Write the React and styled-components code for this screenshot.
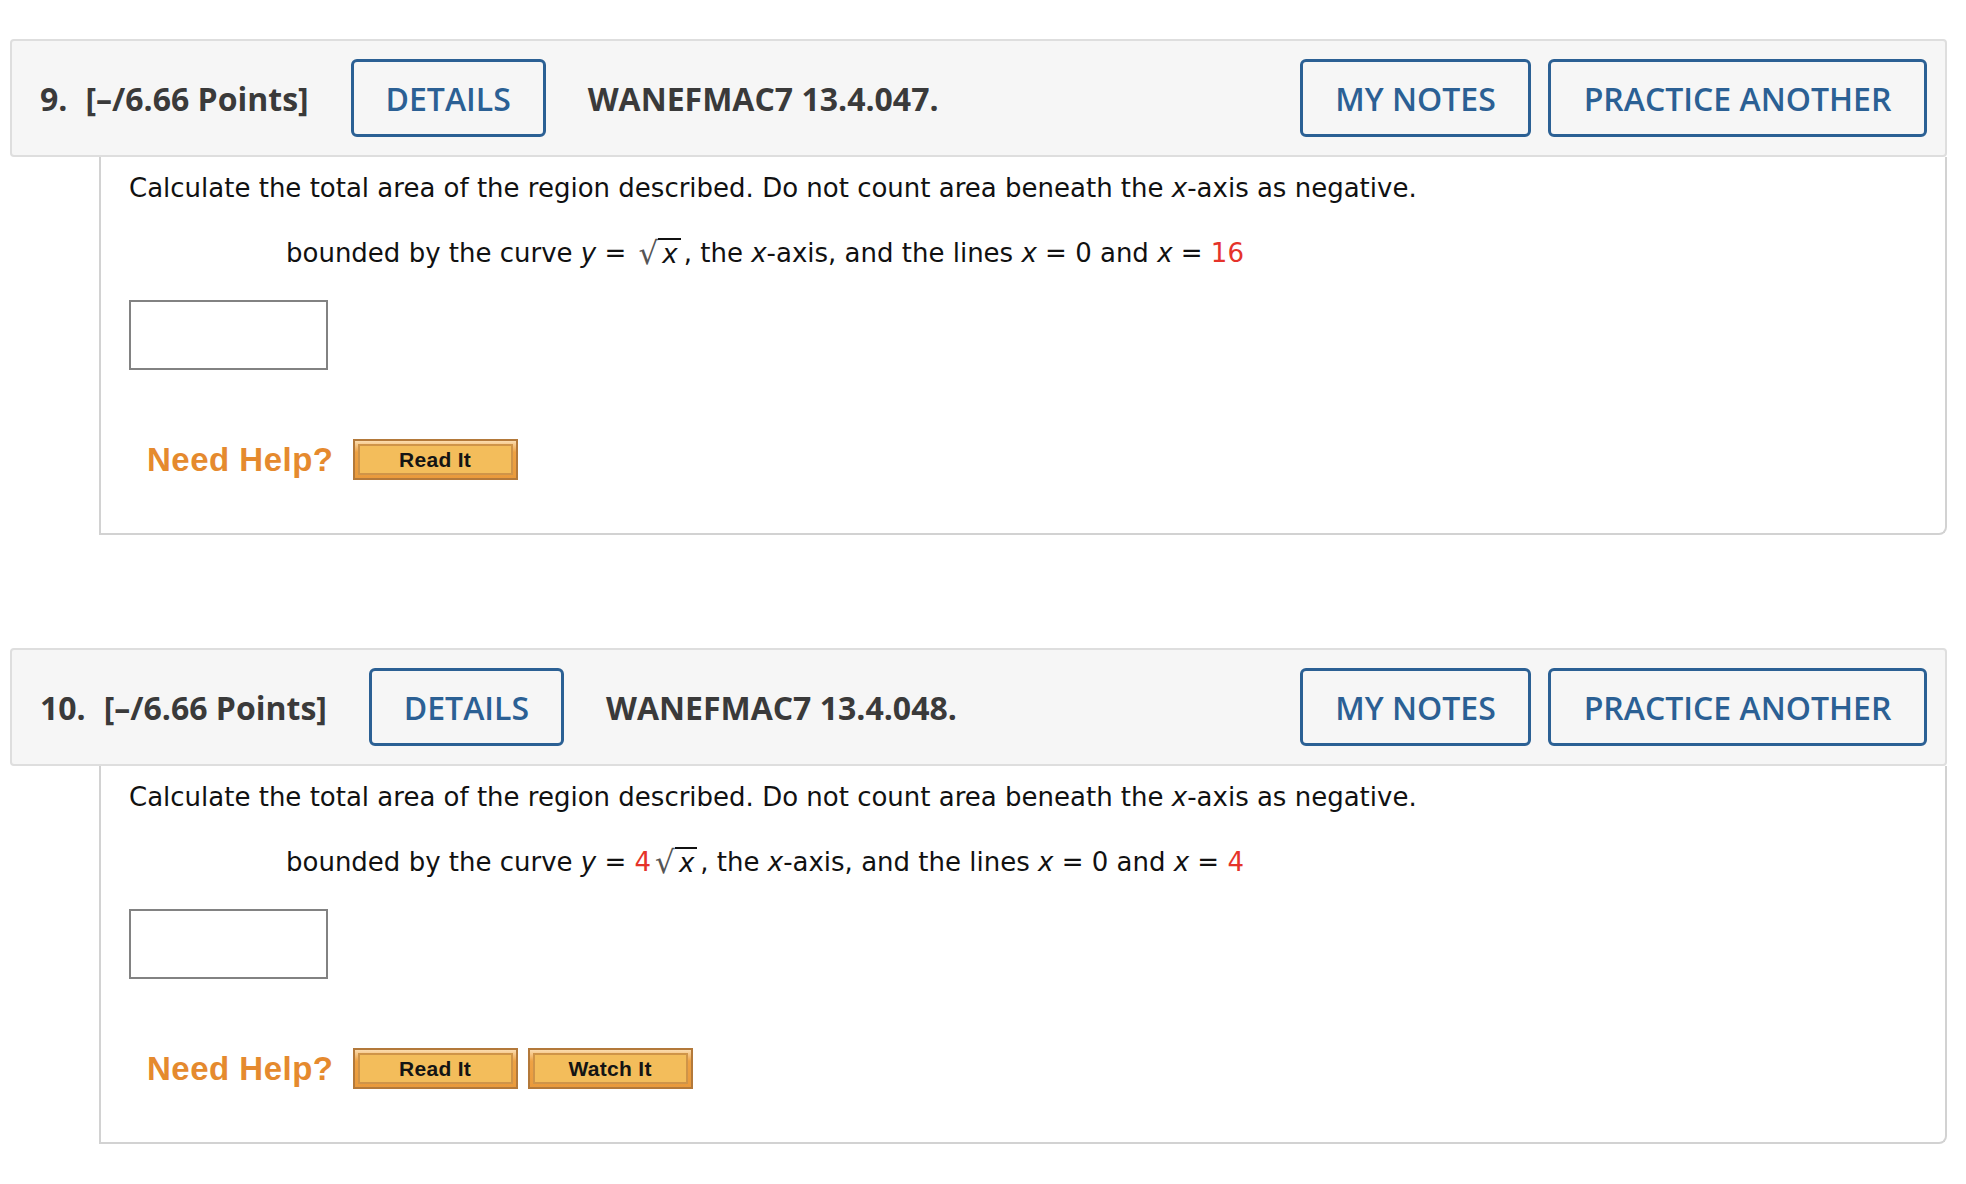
import React from 'react';
import styled, { createGlobalStyle } from 'styled-components';

const GlobalStyle = createGlobalStyle`
  body {
    margin: 0;
    background: #fff;
    font-family: "DejaVu Sans", Verdana, sans-serif;
  }
`;

const Page = styled.div`
  padding: 39px 19px 40px 10px;
`;

const Question = styled.section`
  margin-bottom: 113px;
`;

const Header = styled.div`
  display: flex;
  align-items: center;
  height: 114px;
  background: #f6f6f6;
  border: 2px solid #dedede;
  border-radius: 4px;
  padding: 0 18px 0 28px;
  font-family: "Open Sans", sans-serif;
`;

const Number = styled.span`
  font-size: 32px;
  font-weight: 700;
  color: #3a3a3a;
  margin-right: 18px;
`;

const Points = styled.span`
  font-size: 32px;
  font-weight: 700;
  color: #3a3a3a;
  margin-right: 42px;
`;

const Code = styled.span`
  font-size: 32px;
  font-weight: 700;
  color: #3a3a3a;
  margin-left: 42px;
  flex: 1;
`;

const OutlineButton = styled.button`
  height: 78px;
  width: ${p => p.$w}px;
  margin-left: ${p => p.$ml || 0}px;
  background: transparent;
  border: 3px solid #2b6094;
  border-radius: 6px;
  color: #2b6094;
  font-family: "Open Sans", sans-serif;
  font-size: 32px;
  font-weight: 600;
  padding: 0;
`;

const Body = styled.div`
  margin-left: 89px;
  border: 2px solid #d2d2d2;
  border-top: none;
  border-bottom-right-radius: 8px;
  padding: 16px 28px 53px 28px;
  color: #111;
  font-size: 26px;
`;

const Line = styled.div`
  line-height: 30px;
  white-space: nowrap;
  padding-left: ${p => p.$indent || 0}px;
  margin-top: ${p => p.$mt || 0}px;
`;

const Var = styled.i`
  font-style: italic;
`;

const Red = styled.span`
  color: #e5332a;
`;

const Radical = styled.span`
  display: inline-flex;
  align-items: flex-end;
  margin: 0 3px 0 4px;
  vertical-align: -2px;
`;

const Check = styled.span`
  color: #555;
  font-size: 31px;
  line-height: 30px;
`;

const Radicand = styled.span`
  border-top: 2px solid #111;
  line-height: 28px;
  padding: 0 3px 0 4px;
  font-style: italic;
`;

const AnswerBox = styled.input`
  display: block;
  width: 199px;
  height: 70px;
  box-sizing: border-box;
  margin-top: 32px;
  border: 2px solid #828282;
  background: #fff;
`;

const HelpRow = styled.div`
  display: flex;
  align-items: center;
  margin-top: 69px;
  padding-left: 18px;
`;

const NeedHelp = styled.span`
  font-family: "Liberation Sans", Arial, sans-serif;
  font-size: 33px;
  font-weight: 700;
  letter-spacing: 0.5px;
  color: #e58a2e;
  margin-right: 19px;
`;

const HelpButton = styled.button`
  width: 165px;
  height: 41px;
  margin-right: 10px;
  padding: 3px;
  box-sizing: border-box;
  border: 2px solid #b3793a;
  background: linear-gradient(#fbdcae 0%, #eea244 30%, #e99a3c 100%);
  display: flex;
  cursor: pointer;
`;

const HelpInner = styled.span`
  flex: 1;
  display: flex;
  align-items: center;
  justify-content: center;
  background: #f3bd5b;
  border: 2px solid #cf9448;
  font-family: "Liberation Sans", Arial, sans-serif;
  font-weight: 700;
  font-size: 21px;
  letter-spacing: 0.3px;
  color: #141414;
`;

const Sqrt = ({ children }) => (
  <Radical>
    <Check>√</Check>
    <Radicand>{children}</Radicand>
  </Radical>
);

const questions = [
  { num: '9.', code: 'WANEFMAC7 13.4.047.', coef: null, upper: '16', watch: false },
  { num: '10.', code: 'WANEFMAC7 13.4.048.', coef: '4', upper: '4', watch: true },
];

const QuestionBlock = ({ q }) => (
  <Question>
    <Header>
      <Number>{q.num}</Number>
      <Points>[–/6.66 Points]</Points>
      <OutlineButton $w={195}>DETAILS</OutlineButton>
      <Code>{q.code}</Code>
      <OutlineButton $w={231}>MY NOTES</OutlineButton>
      <OutlineButton $w={379} $ml={17}>PRACTICE ANOTHER</OutlineButton>
    </Header>
    <Body>
      <Line>
        Calculate the total area of the region described. Do not count area beneath the <Var>x</Var>-axis as negative.
      </Line>
      <Line $indent={157} $mt={35}>
        bounded by the curve <Var>y</Var> = {q.coef && <Red>{q.coef}</Red>}
        <Sqrt>x</Sqrt>, the <Var>x</Var>-axis, and the lines <Var>x</Var> = 0 and <Var>x</Var> = <Red>{q.upper}</Red>
      </Line>
      <AnswerBox type="text" />
      <HelpRow>
        <NeedHelp>Need Help?</NeedHelp>
        <HelpButton><HelpInner>Read It</HelpInner></HelpButton>
        {q.watch && <HelpButton><HelpInner>Watch It</HelpInner></HelpButton>}
      </HelpRow>
    </Body>
  </Question>
);

const App = () => (
  <>
    <GlobalStyle />
    <Page>
      {questions.map(q => (
        <QuestionBlock key={q.num} q={q} />
      ))}
    </Page>
  </>
);

export default App;
